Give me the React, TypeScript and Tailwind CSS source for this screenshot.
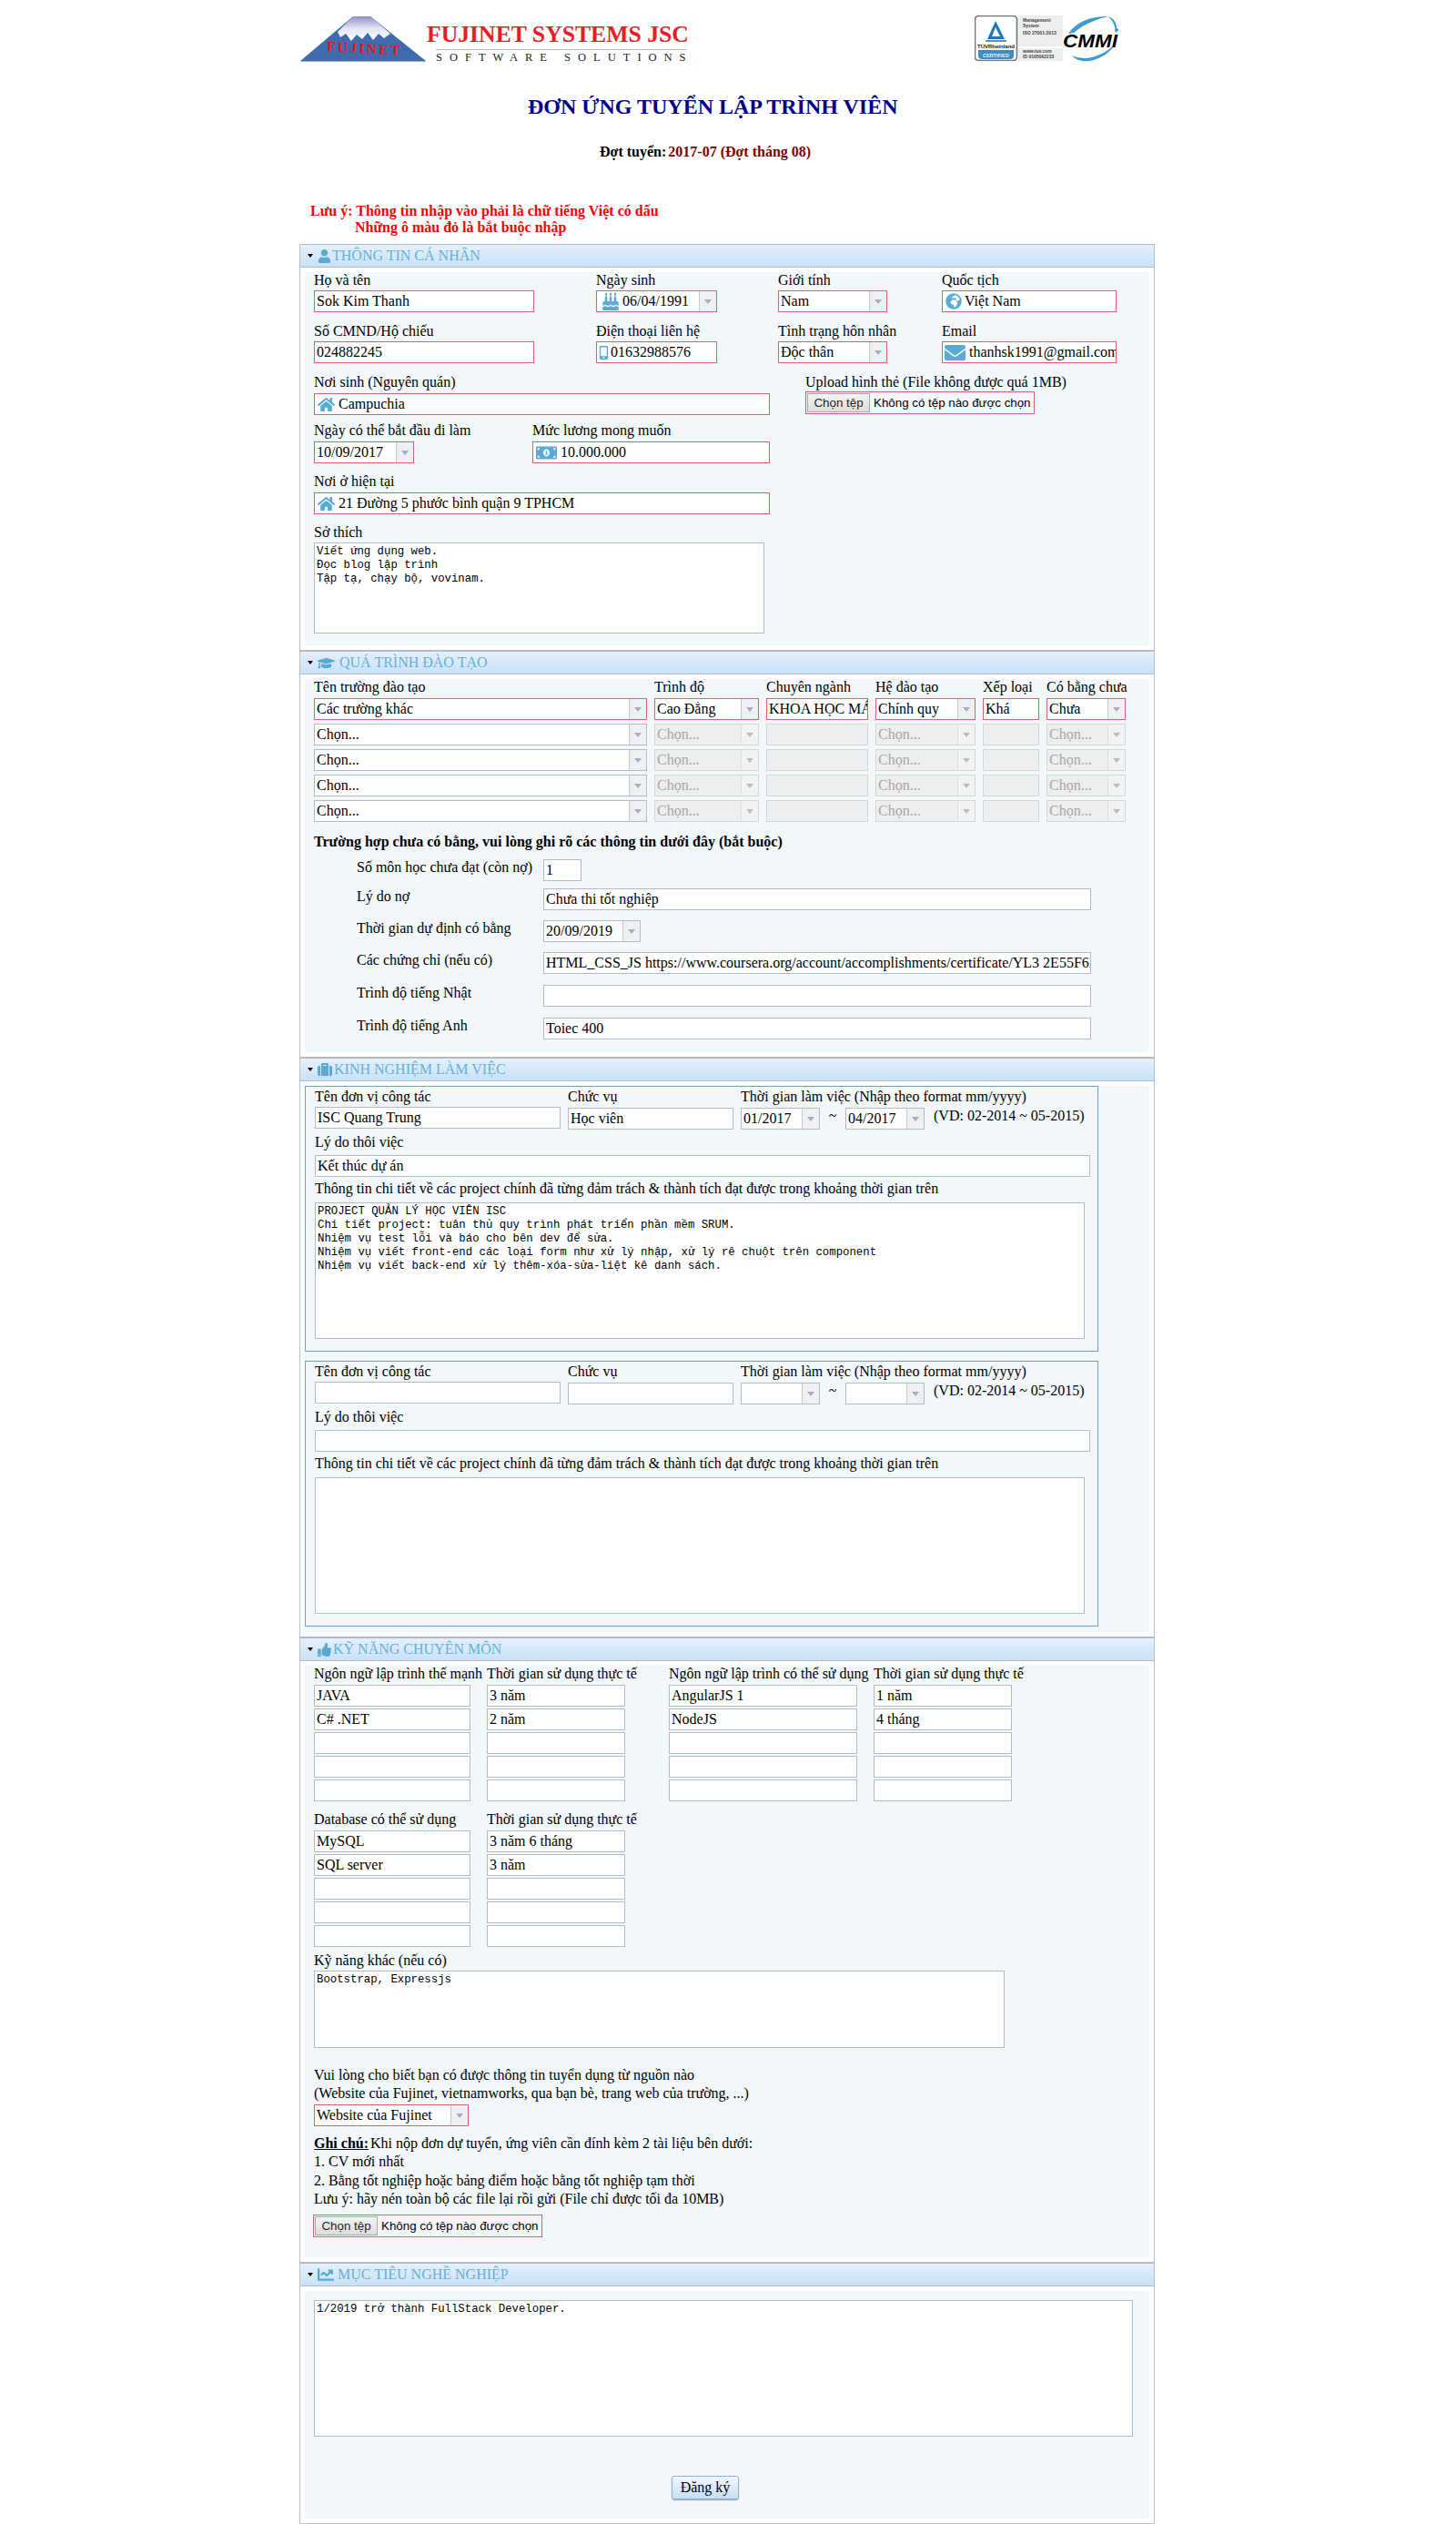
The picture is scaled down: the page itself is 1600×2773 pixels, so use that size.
import React from 'react'
import clsx from 'clsx'
import {
  FaBirthdayCake,
  FaChartLine,
  FaEnvelope,
  FaGlobeAfrica,
  FaGraduationCap,
  FaHome,
  FaMobileAlt,
  FaMoneyBillAlt,
  FaSuitcase,
  FaThumbsUp,
  FaUser,
} from 'react-icons/fa'

const RED = 'border-[#d9616a]'
const GRAY = 'border-[#b3bac8]'

const Txt: React.FC<{ value?: string; req?: boolean; off?: boolean; className?: string }> = ({ value = '', req, off, className }) => (
  <input
    readOnly
    value={value}
    className={clsx(
      'box-border block h-6 border pl-[2px] text-[16px] text-black outline-none',
      req ? RED : off ? 'border-[#d4d4d4]' : GRAY,
      off ? 'bg-[#eeeeee]' : 'bg-white',
      className,
    )}
  />
)

const Drop: React.FC<{ value?: string; req?: boolean; off?: boolean; icon?: React.ReactNode; className?: string }> = ({ value = '', req, off, icon, className }) => (
  <div
    className={clsx(
      'box-border flex h-6 items-stretch border text-[16px] leading-[22px]',
      req ? RED : off ? 'border-[#d4d4d4]' : GRAY,
      off ? 'bg-[#eeeeee] text-[#a6a6a6]' : 'bg-white text-black',
      className,
    )}
  >
    <div className="flex min-w-0 flex-1 items-center overflow-hidden whitespace-nowrap pl-[2px]">
      {icon}
      {value}
    </div>
    <div className={clsx('flex w-[19px] items-center justify-center border-l', off ? 'border-[#dddddd] bg-[#f2f2f2]' : 'border-[#c9c9c9] bg-[#eef0f3]')}>
      <svg width="8" height="5" viewBox="0 0 8 5">
        <path d="M0 0h8L4 5z" fill={off ? '#bdbdbd' : '#a3aec6'} />
      </svg>
    </div>
  </div>
)

const IconBox: React.FC<{ value: string; icon: React.ReactNode; className?: string }> = ({ value, icon, className }) => (
  <div className={clsx('box-border flex h-6 items-center overflow-hidden whitespace-nowrap border bg-white text-[16px]', RED, className)}>
    {icon}
    {value}
  </div>
)

const Label: React.FC<{ children: React.ReactNode; className?: string }> = ({ children, className }) => (
  <div className={clsx('whitespace-nowrap text-[16px] leading-[18px] text-black', className)}>{children}</div>
)

const FileBox: React.FC<{ className?: string }> = ({ className }) => (
  <div className={clsx('box-border flex h-[25px] w-[252px] items-center border pl-px font-["Liberation_Sans",sans-serif] text-[13.33px]', RED, className)}>
    <div className="box-border flex h-[21px] w-[69px] items-center justify-center border border-[#a9a9a9] bg-gradient-to-b from-[#f4f4f4] to-[#dddddd] text-[#222222]">
      Chọn tệp
    </div>
    <span className="ml-1 whitespace-nowrap text-black">Không có tệp nào được chọn</span>
  </div>
)

const Area: React.FC<{ value?: string; className?: string }> = ({ value = '', className }) => (
  <textarea
    readOnly
    value={value}
    className={clsx('box-border block resize-none border bg-white px-[2px] py-[2px] font-["Liberation_Mono",monospace] text-[12.33px] leading-[15px] text-black outline-none', GRAY, className)}
  />
)

const Section: React.FC<{ title: string; icon: React.ReactNode; first?: boolean; gap: string; className?: string; children: React.ReactNode }> = ({ title, icon, first, gap, className, children }) => (
  <section className="pb-[5px]">
    <div
      className={clsx(
        'flex h-[26px] items-center border-b border-[#b0bccb] bg-gradient-to-b from-[#e6f0fa] to-[#c9e1f7] pl-2 text-[16px] text-[#62b1d6]',
        first ? 'border-t border-t-[#aeb6c2]' : 'h-[27px] border-t-[2px] border-t-[#b5bac4]',
      )}
    >
      <svg width="6" height="4" viewBox="0 0 6 4" className="mr-[5px] shrink-0">
        <path d="M0 0h6L3 4z" fill="#000" />
      </svg>
      {icon}
      <span className={clsx('whitespace-nowrap', gap)}>{title}</span>
    </div>
    <div className={clsx('ml-[5px] mt-[5px] w-[928px] bg-[#f2f7fa]', className)}>{children}</div>
  </section>
)

const Mountain = () => (
  <svg width="140" height="52" viewBox="0 0 140 52" className="shrink-0">
    <defs>
      <linearGradient id="snow" x1="0" y1="0" x2="0" y2="1">
        <stop offset="0" stopColor="#8f8fc8" />
        <stop offset="0.5" stopColor="#e6e6f4" />
        <stop offset="1" stopColor="#ffffff" />
      </linearGradient>
    </defs>
    <path d="M0 50 L58 1 H77 L138 50 Z" fill="#3e6cae" />
    <path d="M41 18 L58 1 H77 L99 20 L92 25 L86 20 L80 27 L74 19 L68 26 L62 21 L56 28 L50 20 L44 24 Z" fill="url(#snow)" />
    <text x="29" y="41" fontFamily="'Liberation Serif',serif" fontWeight="700" fontSize="16" letterSpacing="2" fill="#e8141c" transform="rotate(3 60 36)">
      FUJINET
    </text>
    <path d="M0 50.5 H138" stroke="#9fb4d4" strokeWidth="1" />
  </svg>
)

const Tuv = () => (
  <svg width="97" height="50" viewBox="0 0 97 50" className="shrink-0">
    <rect x="0" y="0" width="97" height="50" fill="#ffffff" />
    <rect x="48" y="0" width="49" height="50" fill="#eceded" />
    <rect x="48" y="34" width="49" height="2" fill="#ffffff" />
    <rect x="0.5" y="0.5" width="46" height="49" rx="4" fill="#ffffff" stroke="#6b7479" strokeWidth="1.6" />
    <path d="M4 38 h39 v6 a4 4 0 0 1 -4 4 h-31 a4 4 0 0 1 -4 -4 z" fill="#3e8cc4" />
    <path d="M23 6 L14 26 H33 Z M23 13 L19 23 H28 Z" fill="#1e76bb" fillRule="evenodd" />
    <path d="M12 28 H35" stroke="#1e76bb" strokeWidth="1.5" />
    <text x="23.5" y="36" textAnchor="middle" fontFamily="'Liberation Sans',sans-serif" fontWeight="700" fontSize="6" fill="#222">TÜVRheinland</text>
    <text x="23.5" y="45.5" textAnchor="middle" fontFamily="'Liberation Sans',sans-serif" fontWeight="700" fontSize="5.5" fill="#e8f3fa">CERTIFIED</text>
    <g fontFamily="'Liberation Sans',sans-serif" fontSize="5" fontWeight="700" fill="#444">
      <text x="53" y="7">Management</text>
      <text x="53" y="13">System</text>
      <text x="53" y="21">ISO 27001:2013</text>
      <text x="53" y="41">www.tuv.com</text>
      <text x="53" y="47">ID 9105062233</text>
    </g>
  </svg>
)

const Cmmi = () => (
  <svg width="64" height="52" viewBox="0 0 64 52" className="shrink-0">
    <path d="M6 20 C14 8 28 1 50 1 C42 3 24 8 12 19 Z" fill="#3f9bd2" />
    <path d="M50 1 C58 4 61 12 58 20 C58 12 55 6 50 1 Z" fill="#3f9bd2" />
    <path d="M10 44 C14 49 22 51 28 50 C40 49 54 40 58 30 C52 38 38 46 26 47 C20 47 14 46 10 44 Z" fill="#3f9bd2" />
    <circle cx="59" cy="16" r="2" fill="#3f9bd2" />
    <text x="0" y="35" fontFamily="'Liberation Sans',sans-serif" fontWeight="700" fontStyle="italic" fontSize="21" fill="#000" textLength="60" lengthAdjust="spacingAndGlyphs">
      CMMI
    </text>
  </svg>
)

const ic = 'shrink-0 text-[#5aaad5]'

const FormRow: React.FC<{ label: string; className?: string; children: React.ReactNode }> = ({ label, className, children }) => (
  <div className={clsx('flex', className)}>
    <Label className="w-[252px] pl-[47px]">{label}</Label>
    {children}
  </div>
)

const Work: React.FC<{ name?: string; role?: string; from?: string; to?: string; reason?: string; detail?: string; className?: string }> = ({ name, role, from, to, reason, detail, className }) => (
  <div className={clsx('box-border h-[292px] w-[872px] border border-[#6aa3dc] pl-[10px] pt-px', className)}>
    <div className="flex pt-px">
      <div className="w-[278px]">
        <Label>Tên đơn vị công tác</Label>
        <Txt value={name} className="mt-[2px] w-[270px]" />
      </div>
      <div className="w-[190px]">
        <Label>Chức vụ</Label>
        <Txt value={role} className="mt-[3px] w-[182px]" />
      </div>
      <div>
        <Label>Thời gian làm việc (Nhập theo format mm/yyyy)</Label>
        <div className="mt-[3px] flex items-start">
          <Drop value={from} className="w-[87px]" />
          <span className="w-7 text-center text-[16px] leading-[18px]">~</span>
          <Drop value={to} className="w-[87px]" />
          <span className="ml-[10px] whitespace-nowrap text-[16px] leading-[18px]">(VD: 02-2014 ~ 05-2015)</span>
        </div>
      </div>
    </div>
    <Label className="mt-[5px]">Lý do thôi việc</Label>
    <Txt value={reason} className="mt-[5px] w-[852px]" />
    <Label className="mt-[4px]">Thông tin chi tiết về các project chính đã từng đảm trách &amp; thành tích đạt được trong khoảng thời gian trên</Label>
    <Area value={detail} className="mt-[6px] h-[150px] w-[846px]" />
  </div>
)

const SkillCol: React.FC<{ title: string; values: string[]; w: string }> = ({ title, values, w }) => (
  <div className="flex flex-col gap-[2px]">
    <Label className="h-[19px]">{title}</Label>
    {[0, 1, 2, 3, 4].map((i) => (
      <Txt key={i} value={values[i]} className={w} />
    ))}
  </div>
)

const schoolCols = ['w-[115px]', 'w-[112px]', 'w-[110px]', 'w-[62px]', 'w-[87px]']

const EmptySchoolRow = () => (
  <>
    <Drop value="Chọn..." className="w-[366px]" />
    <Drop value="Chọn..." off className={schoolCols[0]} />
    <Txt off className={schoolCols[1]} />
    <Drop value="Chọn..." off className={schoolCols[2]} />
    <Txt off className={schoolCols[3]} />
    <Drop value="Chọn..." off className={schoolCols[4]} />
  </>
)

export default function App() {
  return (
    <div className="h-[2773px] w-[1600px] overflow-hidden bg-white font-['Liberation_Serif','Times_New_Roman',serif] text-[16px] text-black">
      <header className="ml-[330px] box-content flex h-[52px] pt-[17px]">
        <Mountain />
        <div className="-ml-px w-[291px] shrink-0">
          <div className="mt-[7px] h-[30px] whitespace-nowrap text-[25.7px] font-bold leading-[28px] text-[#ec1c24]">FUJINET SYSTEMS JSC</div>
          <div className="ml-[10px] w-[276px] whitespace-nowrap border-t border-[#bdbdbd] pt-[2px] text-[12.5px] leading-[13px] tracking-[8px] text-[#222222]">SOFTWARE SOLUTIONS</div>
        </div>
        <div className="ml-[311px] flex">
          <Tuv />
          <Cmmi />
        </div>
      </header>

      <h1 className="ml-[580px] mt-[35px] whitespace-nowrap text-[24px] font-bold leading-[27px] text-[#00008b]">ĐƠN ỨNG TUYỂN LẬP TRÌNH VIÊN</h1>
      <div className="ml-[659px] mt-[27px] whitespace-nowrap font-bold leading-[18px]">
        Đợt tuyển:<span className="ml-[2px] text-[#800000]">2017-07 (Đợt tháng 08)</span>
      </div>
      <div className="ml-[341px] mt-[47px] font-bold leading-[18px] text-[#ff0000]">
        <div>Lưu ý: Thông tin nhập vào phải là chữ tiếng Việt có dấu</div>
        <div className="ml-[49px]">Những ô màu đỏ là bắt buộc nhập</div>
      </div>

      <main className="ml-[329px] mt-[9px] box-border w-[940px] border-x border-b border-[#bcc2cc]">
        <Section title="THÔNG TIN CÁ NHÂN" first gap="ml-[1px]" icon={<FaUser size={15} className={ic} />} className="h-[410px] pl-[10px]">
          <div className="grid grid-cols-[310px_200px_180px_192px]">
            <div>
              <Label>Họ và tên</Label>
              <Txt req value="Sok Kim Thanh" className="mt-[2px] w-[242px]" />
            </div>
            <div>
              <Label>Ngày sinh</Label>
              <Drop req value="06/04/1991" icon={<FaBirthdayCake size={20} className={clsx(ic, 'ml-[3px] mr-[3px]')} />} className="mt-[2px] w-[133px]" />
            </div>
            <div>
              <Label>Giới tính</Label>
              <Drop req value="Nam" className="mt-[2px] w-[120px]" />
            </div>
            <div>
              <Label>Quốc tịch</Label>
              <IconBox value="Việt Nam" icon={<FaGlobeAfrica size={18} className={clsx(ic, 'ml-[3px] mr-[3px]')} />} className="mt-[2px] w-[192px]" />
            </div>
          </div>
          <div className="mt-3 grid grid-cols-[310px_200px_180px_192px]">
            <div>
              <Label>Số CMND/Hộ chiếu</Label>
              <Txt req value="024882245" className="mt-[2px] w-[242px]" />
            </div>
            <div>
              <Label>Điện thoại liên hệ</Label>
              <IconBox value="01632988576" icon={<FaMobileAlt size={15} className={ic} />} className="mt-[2px] w-[133px]" />
            </div>
            <div>
              <Label>Tình trạng hôn nhân</Label>
              <Drop req value="Độc thân" className="mt-[2px] w-[120px]" />
            </div>
            <div>
              <Label>Email</Label>
              <IconBox value="thanhsk1991@gmail.com" icon={<FaEnvelope size={23} className={clsx(ic, 'ml-[2px] mr-[4px]')} />} className="mt-[2px] w-[192px]" />
            </div>
          </div>
          <div className="mt-3 flex">
            <div className="w-[540px]">
              <Label>Nơi sinh (Nguyên quán)</Label>
              <IconBox value="Campuchia" icon={<FaHome size={19} className={clsx(ic, 'ml-[3px] mr-[4px]')} />} className="mt-[3px] w-[501px]" />
            </div>
            <div>
              <Label>Upload hình thẻ (File không được quá 1MB)</Label>
              <FileBox className="mt-px" />
            </div>
          </div>
          <div className="mt-2 flex">
            <div className="w-[240px]">
              <Label>Ngày có thể bắt đầu đi làm</Label>
              <Drop req value="10/09/2017" className="mt-[3px] w-[110px]" />
            </div>
            <div>
              <Label>Mức lương mong muốn</Label>
              <IconBox value="10.000.000" icon={<FaMoneyBillAlt size={23} className={clsx(ic, 'ml-[3px] mr-[4px]')} />} className="mt-[3px] w-[261px]" />
            </div>
          </div>
          <Label className="mt-[11px]">Nơi ở hiện tại</Label>
          <IconBox value="21 Đường 5 phước bình quận 9 TPHCM" icon={<FaHome size={19} className={clsx(ic, 'ml-[3px] mr-[4px]')} />} className="mt-[3px] w-[501px]" />
          <Label className="mt-[11px]">Sở thích</Label>
          <Area value={'Viết ứng dụng web.\nĐọc blog lập trình\nTập tạ, chạy bộ, vovinam.'} className="mt-[2px] h-[100px] w-[495px]" />
        </Section>

        <Section title="QUÁ TRÌNH ĐÀO TẠO" gap="ml-[5px]" icon={<FaGraduationCap size={19} className={ic} />} className="h-[410px] pl-[10px]">
          <div className="grid grid-cols-[374px_123px_120px_118px_70px_87px] gap-y-1">
            <Label className="h-[17px]">Tên trường đào tạo</Label>
            <Label className="h-[17px]">Trình độ</Label>
            <Label className="h-[17px]">Chuyên ngành</Label>
            <Label className="h-[17px]">Hệ đào tạo</Label>
            <Label className="h-[17px]">Xếp loại</Label>
            <Label className="h-[17px]">Có bằng chưa</Label>
            <Drop req value="Các trường khác" className="w-[366px]" />
            <Drop req value="Cao Đẳng" className={schoolCols[0]} />
            <Txt req value="KHOA HỌC MÁY TÍNH" className={schoolCols[1]} />
            <Drop req value="Chính quy" className={schoolCols[2]} />
            <Txt req value="Khá" className={schoolCols[3]} />
            <Drop req value="Chưa" className={schoolCols[4]} />
            <EmptySchoolRow />
            <EmptySchoolRow />
            <EmptySchoolRow />
            <EmptySchoolRow />
          </div>
          <div className="mt-[13px] font-bold leading-[18px]">Trường hợp chưa có bằng, vui lòng ghi rõ các thông tin dưới đây (bắt buộc)</div>
          <FormRow label="Số môn học chưa đạt (còn nợ)" className="mt-[10px]">
            <Txt value="1" className="w-[42px]" />
          </FormRow>
          <FormRow label="Lý do nợ" className="mt-2">
            <Txt value="Chưa thi tốt nghiệp" className="w-[602px]" />
          </FormRow>
          <FormRow label="Thời gian dự định có bằng" className="mt-[11px]">
            <Drop value="20/09/2019" className="w-[107px]" />
          </FormRow>
          <FormRow label="Các chứng chỉ (nếu có)" className="mt-[11px]">
            <Txt value="HTML_CSS_JS https://www.coursera.org/account/accomplishments/certificate/YL3 2E55F6XYZ" className="w-[602px]" />
          </FormRow>
          <FormRow label="Trình độ tiếng Nhật" className="mt-3">
            <Txt className="w-[602px]" />
          </FormRow>
          <FormRow label="Trình độ tiếng Anh" className="mt-3">
            <Txt value="Toiec 400" className="w-[602px]" />
          </FormRow>
        </Section>

        <Section title="KINH NGHIỆM LÀM VIỆC" gap="ml-[2px]" icon={<FaSuitcase size={16} className={ic} />} className="h-[600px]">
          <Work
            name="ISC Quang Trung"
            role="Học viên"
            from="01/2017"
            to="04/2017"
            reason="Kết thúc dự án"
            detail={'PROJECT QUẢN LÝ HỌC VIÊN ISC\nChi tiết project: tuân thủ quy trình phát triển phần mềm SRUM.\nNhiệm vụ test lỗi và báo cho bên dev để sửa.\nNhiệm vụ viết front-end các loại form như xử lý nhập, xử lý rê chuột trên component\nNhiệm vụ viết back-end xử lý thêm-xóa-sửa-liệt kê danh sách.'}
          />
          <Work className="mt-[10px]" />
        </Section>

        <Section title="KỸ NĂNG CHUYÊN MÔN" gap="ml-[2px]" icon={<FaThumbsUp size={15} className={ic} />} className="h-[650px] pl-[10px]">
          <div className="grid grid-cols-[190px_200px_225px_152px]">
            <SkillCol title="Ngôn ngữ lập trình thế mạnh" values={['JAVA', 'C# .NET']} w="w-[172px]" />
            <SkillCol title="Thời gian sử dụng thực tế" values={['3 năm', '2 năm']} w="w-[152px]" />
            <SkillCol title="Ngôn ngữ lập trình có thể sử dụng" values={['AngularJS 1', 'NodeJS']} w="w-[207px]" />
            <SkillCol title="Thời gian sử dụng thực tế" values={['1 năm', '4 tháng']} w="w-[152px]" />
          </div>
          <div className="mt-[11px] grid grid-cols-[190px_200px]">
            <SkillCol title="Database có thể sử dụng" values={['MySQL', 'SQL server']} w="w-[172px]" />
            <SkillCol title="Thời gian sử dụng thực tế" values={['3 năm 6 tháng', '3 năm']} w="w-[152px]" />
          </div>
          <Label className="mt-[6px]">Kỹ năng khác (nếu có)</Label>
          <Area value="Bootstrap, Expressjs" className="mt-[2px] h-[85px] w-[759px]" />
          <div className="mt-5 leading-5">
            <div>Vui lòng cho biết bạn có được thông tin tuyển dụng từ nguồn nào</div>
            <div>(Website của Fujinet, vietnamworks, qua bạn bè, trang web của trường, ...)</div>
          </div>
          <Drop req value="Website của Fujinet" className="mt-[2px] w-[170px]" />
          <div className="mt-[9px] leading-[20.3px]">
            <div>
              <b className="underline">Ghi chú:</b>
              <span className="ml-[2px]">Khi nộp đơn dự tuyển, ứng viên cần đính kèm 2 tài liệu bên dưới:</span>
            </div>
            <div>1. CV mới nhất</div>
            <div>2. Bằng tốt nghiệp hoặc bảng điểm hoặc bằng tốt nghiệp tạm thời</div>
            <div>Lưu ý: hãy nén toàn bộ các file lại rồi gửi (File chỉ được tối đa 10MB)</div>
          </div>
          <FileBox className="-ml-px mt-[7px]" />
        </Section>

        <Section title="MỤC TIÊU NGHỀ NGHIỆP" gap="ml-[4px]" icon={<FaChartLine size={18} className={ic} />} className="h-[250px] pl-[10px] pt-[10px]">
          <Area value="1/2019 trở thành FullStack Developer." className="h-[150px] w-[900px]" />
          <button className="ml-[393px] mt-[43px] box-border block h-[26px] w-[74px] rounded-[3px] border border-[#8fb0d4] bg-gradient-to-b from-[#f4f9fe] to-[#c7dff6] text-[16px] shadow-[0_1px_1px_#9aa5b1]">
            Đăng ký
          </button>
        </Section>
      </main>
    </div>
  )
}
